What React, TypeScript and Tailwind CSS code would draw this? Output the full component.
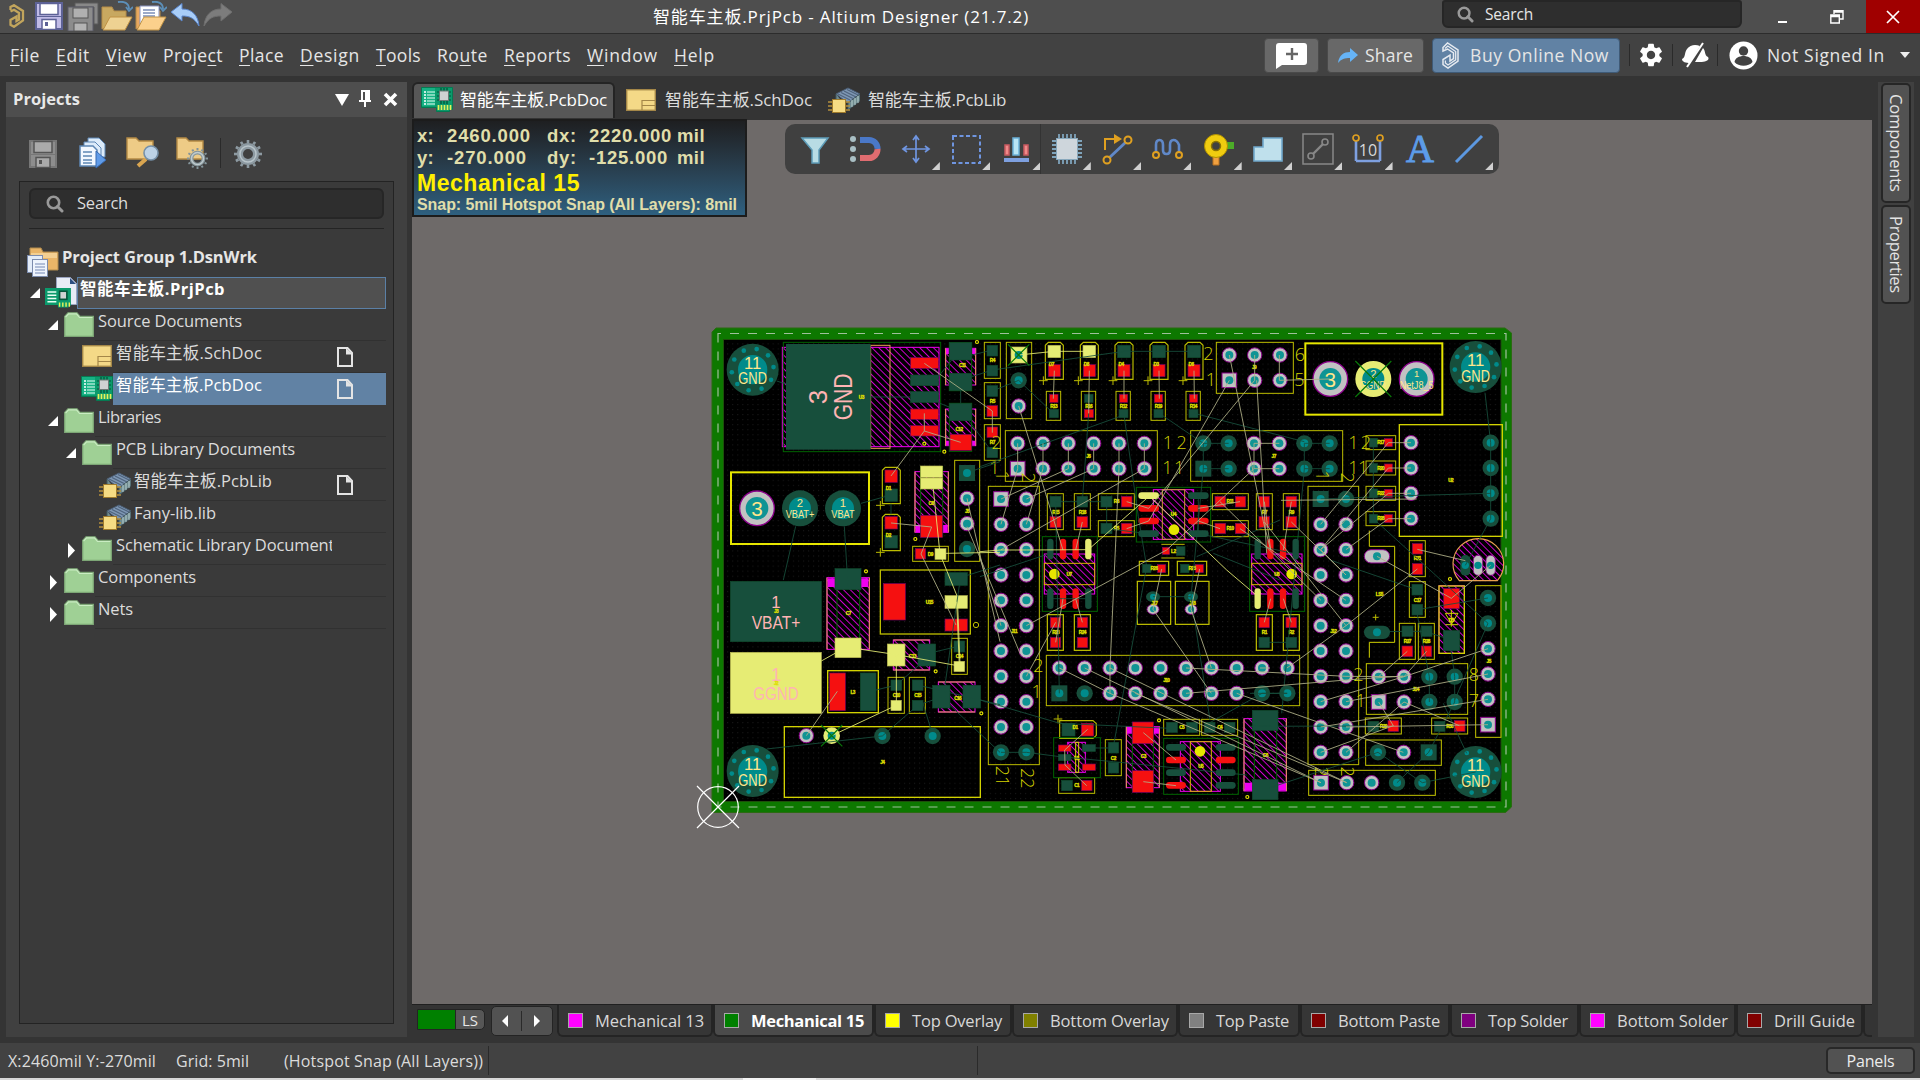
import React, { useLayoutEffect, useRef, useState } from "react";
import { MdSettings } from "react-icons/md";

const UI = "font-['Open_Sans','Noto_Sans_CJK_SC',sans-serif]";

/* One line of text whose tracking is adjusted so that it spans `w` pixels. */
function Fit({ w, children, className = "" }: { w: number; children: React.ReactNode; className?: string }) {
  const ref = useRef<HTMLSpanElement>(null);
  const [ls, setLs] = useState(0);
  useLayoutEffect(() => {
    const el = ref.current;
    if (!el) return;
    const n = (el.textContent || "").length;
    setLs((w - el.getBoundingClientRect().width) / n);
  }, [w]);
  return (
    <span className={"block shrink-0 whitespace-nowrap " + className} style={{ width: w }}>
      <span ref={ref} className="inline-block" style={{ letterSpacing: ls }}>
        {children}
      </span>
    </span>
  );
}

/* ---------- icons ---------- */
const Svg = ({ w, h, vb, className = "", children }: { w: number; h: number; vb?: string; className?: string; children: React.ReactNode }) => (
  <svg width={w} height={h} viewBox={vb || `0 0 ${w} ${h}`} className={"block shrink-0 " + className} fill="none">
    {children}
  </svg>
);

const Logo = ({ c = "#c2a55c", w = 16, h = 24 }: { c?: string; w?: number; h?: number }) => (
  <Svg w={w} h={h} vb="0 0 16 24">
    <path d="M1.500 6V3L5 1.200 14 7v9.500L5 22.800l-3.500-2V16l6-3.500V17l2.500-1.500V9L5 5.800 1.500 7.500" stroke={c} strokeWidth="2.300" strokeLinejoin="miter" />
  </Svg>
);
const LogoLine = () => (
  <Svg w={19} h={27} vb="0 0 19 27">
    <path d="M2 5.500 6.500 1 17 8v11L7 26l-5-3.500v-5L9 13v6l3.500-2.500V11L6.500 7 2 9z" stroke="#e6eaf0" strokeWidth="1.500" />
    <path d="M4 6.500 6.800 4 14.700 9.500v8.300L7 23l-2.600-2v-2.500" stroke="#e6eaf0" strokeWidth="1.300" />
  </Svg>
);
const Floppy = ({ dim = false, w = 28 }: { dim?: boolean; w?: number }) => {
  const a = dim ? "#777" : "#5d6296", b = dim ? "#8d8d8d" : "#c0bbe6", p = dim ? "#aaa" : "#fff", k = dim ? "#555" : "#5d6296";
  return (
    <Svg w={w} h={w} vb="0 0 28 28">
      <rect x="1" y="1" width="26" height="26" fill={b} stroke={a} strokeWidth="2" />
      <rect x="5" y="1.500" width="18" height="11" fill={p} stroke={k} strokeWidth="1.500" />
      <path d="M2 14.500h24" stroke={a} />
      <rect x="7" y="17.500" width="14" height="10" fill={p} stroke={k} strokeWidth="1.500" />
      <rect x="10" y="20" width="3" height="4" fill={k} />
    </Svg>
  );
};
const SaveAll = () => (
  <Svg w={32} h={30}>
    <path d="M8 2h23v21h-4V6H8z" fill="#888" stroke="#5a5a5a" />
    <rect x="1" y="6" width="25" height="24" fill="#8c8c8c" stroke="#5a5a68" />
    <rect x="6" y="7" width="15" height="10" fill="#b0b0b0" stroke="#555" />
    <rect x="7" y="22" width="13" height="8" fill="#b4b4b4" stroke="#555" />
  </Svg>
);
const OpenFolder = ({ doc = false }: { doc?: boolean }) => (
  <Svg w={32} h={30}>
    <path d="M1 28V6h10l2 4h12v6" fill={doc ? "#e8a860" : "#c8a860"} stroke="#b58c46" />
    {doc && (
      <>
        <path d="M5 5h19v20H5z" fill="#fff" stroke="#8a94c0" />
        <path d="M8 9h12M8 12h12M8 15h12" stroke="#7c8fb8" strokeWidth="1.300" />
      </>
    )}
    <path d="M9 16h22l-7 13H2z" fill={doc ? "#fbd08c" : "#eed292"} stroke="#c09244" />
    <path d="M17 1c6-1 11 1 11 7M25 6l3 4 4-4" stroke="#5c8fb8" strokeWidth="1.800" />
  </Svg>
);
const Undo = ({ dim = false }: { dim?: boolean }) => (
  <Svg w={30} h={24} className={dim ? "-scale-x-100" : ""}>
    <path d="M1 9 12 .500V6c10 0 16 6 17 17-5-8-9-10-17-10v5z" fill={dim ? "#7c7c7c" : "#a8cdf8"} stroke={dim ? "#6e6e6e" : "#5b86cc"} />
  </Svg>
);
const Mag = ({ s = 18 }: { s?: number }) => (
  <Svg w={s} h={s} vb="0 0 18 18">
    <circle cx="7.500" cy="7.500" r="5.700" stroke="#999" strokeWidth="2.600" />
    <path d="m11.500 11.500 4.500 4.500" stroke="#999" strokeWidth="3" strokeLinecap="round" />
  </Svg>
);
const gearTeeth = (r: number, n: number) =>
  Array.from({ length: n }, (_, i) => {
    const a = (i * 2 * Math.PI) / n;
    return <path key={i} d={`M${14 + (r - 3) * Math.cos(a)} ${14 + (r - 3) * Math.sin(a)}L${14 + r * Math.cos(a)} ${14 + r * Math.sin(a)}`} />;
  });
const Gear = ({ s = 28, c = "#8d9aa2" }: { s?: number; c?: string }) => (
  <Svg w={s} h={s} vb="0 0 28 28">
    <g stroke={c} strokeWidth="2.600">{gearTeeth(14, 12)}</g>
    <circle cx="14" cy="14" r="8" stroke={c} strokeWidth="6" />
    <circle cx="14" cy="14" r="8" stroke="#b8c4ca" strokeWidth="1.500" />
  </Svg>
);
const PcbIcon = ({ w = 32 }: { w?: number }) => (
  <Svg w={w} h={(w * 25) / 32} vb="0 0 32 25">
    <path d="M.500.500h31v22h-3v2h-13v-4H.500z" fill="#0b9a6c" stroke="#057a52" />
    <rect x="1" y="1" width="13" height="18" fill="#16b184" />
    <path d="M3 5h2M3 8h2M3 11h2M3 14h2M3 17h2" stroke="#fff" strokeWidth="1.400" />
    <path d="M6 5h8M6 8h8M6 11h8M6 14h8M6 17h8" stroke="#e8fff4" strokeWidth="1.200" />
    <path d="M20 1v16M23 1v16M26 1v16M16 5h14M16 9h14M16 13h14" stroke="#064f38" strokeWidth="1.200" />
    <rect x="18.500" y="4" width="9" height="9.500" fill="#cfd2d2" stroke="#6d7a76" />
    <path d="M17.500 18v5M20.500 18v5M23.500 18v5M26.500 18v5M29.500 18v5" stroke="#e6f25a" strokeWidth="1.700" />
  </Svg>
);
const SchIcon = () => (
  <Svg w={30} h={22}>
    <rect x=".700" y=".700" width="28.600" height="20.600" fill="#f4d987" stroke="#a48748" strokeWidth="1.400" />
    <path d="M16 21v-9.500h13.500M16 16.500h13.500" stroke="#a48748" strokeWidth="1.200" />
  </Svg>
);
const LibIcon = () => (
  <Svg w={32} h={26}>
    <path d="m8 7 12-6 12 6-12 9z" fill="#7e97b4" stroke="#4a5d74" />
    <path d="m10 7 12 6M13 5.500l12 6M16 4l12 6M19 2.500l11 5.500" stroke="#4f647d" strokeWidth="1.200" />
    <path d="m20 16 12-9v7l-12 9zM8 7v6l8 4" fill="#6f8b8f" stroke="#41565e" />
    <path d="M24 13v7M27 11v7M30 9v7" stroke="#b8cfd0" />
    <path d="M0 15h22M0 19h22M0 23h22" stroke="#b48f3c" strokeWidth="1.400" />
    <rect x="4.500" y="12.500" width="13" height="13" fill="#f6dc84" stroke="#a07b2c" />
  </Svg>
);
const Folder = () => (
  <Svg w={30} h={25}>
    <path d="M.700 24.300V4.500L4 .800h9l3 3.700h13.300v19.800z" fill="#9fd095" stroke="#7da676" strokeWidth="1.300" />
    <path d="M1.500 5.200 4.500 1.800h8l3 3.700h13" stroke="#c9ecc2" strokeWidth="1.200" />
  </Svg>
);
const Page = () => (
  <Svg w={16} h={20}>
    <path d="M1 1h9.500L15 6v13H1z" stroke="#e4e4e4" strokeWidth="2" />
    <path d="M9 1v6.500h6.500z" fill="#e4e4e4" />
  </Svg>
);
const GroupIcon = () => (
  <Svg w={32} h={30}>
    <path d="M3 20V1h11l2 4h15v18H3z" fill="#e9b568" stroke="#b08a4c" />
    <path d="M4 6h26v5H4z" fill="#f3cf91" />
    <rect x=".500" y="8.500" width="15" height="17" fill="#e3ecf8" stroke="#7c8cad" />
    <rect x="5.500" y="12.500" width="15" height="17" fill="#eef4fd" stroke="#7c8cad" />
    <path d="M8 17h10M8 20h10M8 23h10M8 26h10" stroke="#7488b4" strokeWidth="1.200" />
  </Svg>
);
const ProjIcon = () => (
  <Svg w={32} h={31}>
    <path d="M11.500.500h14l6 6v21h-20z" fill="#e8ecf6" stroke="#9aa3c0" />
    <path d="M25 1v6h6z" fill="#2b4d80" />
    <g transform="translate(0 11) scale(.810)">
      <path d="M0 0h32v22h-3v2H16v-3H0z" fill="#0b9a6c" />
      <path d="M3 5h11M3 9h11M3 13h11M3 17h11" stroke="#e8fff4" strokeWidth="1.700" />
      <rect x="18" y="4" width="9" height="10" fill="#cfd2d2" stroke="#05553a" strokeWidth="2" />
      <path d="M18 18v5M22 18v5M26 18v5M30 18v5" stroke="#e6f25a" strokeWidth="1.800" />
    </g>
  </Svg>
);

/* ---------- title and menu bars ---------- */
function TitleBar() {
  return (
    <div className="flex h-[34px] shrink-0 items-start border-b border-[#2c2c2c] bg-[#4e4e4e] text-white">
      <div className="flex w-[653px] shrink-0 items-start pl-[7px] pt-[1px]">
        <div className="pl-0.5 pt-[3px]"><Logo /></div>
        <div className="ml-[10px] pt-[1px]"><Floppy /></div>
        <div className="ml-[4px]"><SaveAll /></div>
        <div className="ml-[2px]"><OpenFolder /></div>
        <div className="ml-[2px]"><OpenFolder doc /></div>
        <div className="ml-[3px] pt-[2px]"><Undo /></div>
        <div className="ml-[3px] pt-[2px]"><Undo dim /></div>
      </div>
      <Fit w={376} className="pt-[4px] text-[17px] leading-[26px]">智能车主板.PrjPcb - Altium Designer (21.7.2)</Fit>
      <div className="ml-[413px] flex h-[28px] w-[300px] shrink-0 items-center rounded-b-[6px] rounded-t-[3px] border-2 border-[#262626] bg-[#2e2e2e] pl-[13px]">
        <Mag s={17} />
        <Fit w={48} className="ml-[11px] text-[15.500px] leading-[24px] text-[#e6e6e6]">Search</Fit>
      </div>
      <div className="ml-[36px] mt-[21px] h-[2px] w-[9px] shrink-0 bg-white" />
      <Svg w={14} h={14} className="ml-[43px] mt-[10px]">
        <path d="M4 4V.800h9V9h-3M.800 5h8.500v8H.800zM.800 6.500h8.500M4 2h9" stroke="#fff" strokeWidth="1.400" />
      </Svg>
      <div className="ml-auto flex h-[33px] w-[54px] shrink-0 items-center justify-center bg-[#a00000]">
        <Svg w={14} h={14}><path d="m1 1 12 12M13 1 1 13" stroke="#fff" strokeWidth="1.700" /></Svg>
      </div>
    </div>
  );
}

const menus: [string, number, number][] = [
  ["File", 0, 30], ["Edit", 0, 34], ["View", 0, 41], ["Project", 5, 60], ["Place", 0, 45], ["Design", 0, 60],
  ["Tools", 0, 45], ["Route", 2, 51], ["Reports", 0, 67], ["Window", 0, 71], ["Help", 0, 41],
];
const Sep = ({ h = 22 }: { h?: number }) => <div className="w-px shrink-0 bg-[#2a2a2a]" style={{ height: h }} />;

function MenuBar() {
  return (
    <div className="flex h-[42px] shrink-0 items-center bg-[#424242] text-[17.500px] leading-[26px] text-[#e6e6e6]">
      <div className="flex gap-4 pl-[10px]">
        {menus.map(([t, u, w]) => (
          <Fit key={t} w={w}>
            {t.slice(0, u)}<span className="underline decoration-1 underline-offset-[3px]">{t[u]}</span>{t.slice(u + 1)}
          </Fit>
        ))}
      </div>
      <div className="ml-auto flex items-center">
        <div className="flex h-[35px] w-[55px] items-center justify-center rounded-[4px] border border-[#4a4a4a] bg-[#686868]">
          <Svg w={33} h={27}>
            <path d="M4 1h25q3 0 3 3v16q0 3-3 3H7l-6 4V4q0-3 3-3z" fill="#fff" />
            <path d="M17 6v12M11 12h12" stroke="#666" strokeWidth="2.400" />
          </Svg>
        </div>
        <div className="ml-[8px] flex h-[35px] w-[97px] items-center rounded-[4px] border border-[#4a4a4a] bg-[#686868] pl-[9px]">
          <Svg w={21} h={17}><path d="M1 16c1-8 6-11 12-11V1l8 7-8 7v-4C8 11 4 12 1 16z" fill="#66b3f5" /></Svg>
          <Fit w={48} className="ml-[7px]">Share</Fit>
        </div>
        <div className="ml-[8px] flex h-[35px] w-[188px] items-center rounded-[4px] border border-[#3f5a76] bg-[#6182a4] pl-[8px]">
          <LogoLine />
          <Fit w={139} className="ml-[10px]">Buy Online Now</Fit>
        </div>
        <div className="ml-[9px]"><Sep /></div>
        <MdSettings size={28} color="#fff" className="ml-[7px] shrink-0" />
        <div className="ml-[7px]"><Sep /></div>
        <Svg w={28} h={26} className="ml-[8px]">
          <path d="M1 17C5 15 3 11 6 7s8-5 13-3L9 21C5 21 1 20 1 17zM22 6c3 3 1 7 5 9 2 3-2 5-8 5h-5z" fill="#fff" />
          <path d="M22 1 6 25" stroke="#fff" strokeWidth="2" />
        </Svg>
        <div className="ml-[8px]"><Sep /></div>
        <Svg w={29} h={29} className="ml-[11px]">
          <circle cx="14.500" cy="14.500" r="14" fill="#fff" />
          <circle cx="14.500" cy="10" r="4.700" fill="#424242" />
          <path d="M5.500 21c1-8 17-8 18 0-4 5-14 5-18 0z" fill="#424242" />
        </Svg>
        <Fit w={118} className="ml-[9px]">Not Signed In</Fit>
        <Svg w={10} h={6} className="ml-[15px] mr-[10px]"><path d="M0 0h10L5 6z" fill="#eee" /></Svg>
      </div>
    </div>
  );
}

/* ---------- projects panel ---------- */
type Row = { pad: number; arrow?: "open" | "closed"; icon: "folder" | "sch" | "pcb" | "lib"; text: string; w: number; page?: boolean; sel?: boolean };
const rows: Row[] = [
  { pad: 19, arrow: "open", icon: "folder", text: "Source Documents", w: 144 },
  { pad: 37, icon: "sch", text: "智能车主板.SchDoc", w: 146, page: true },
  { pad: 37, icon: "pcb", text: "智能车主板.PcbDoc", w: 146, page: true, sel: true },
  { pad: 19, arrow: "open", icon: "folder", text: "Libraries", w: 63 },
  { pad: 37, arrow: "open", icon: "folder", text: "PCB Library Documents", w: 179 },
  { pad: 55, icon: "lib", text: "智能车主板.PcbLib", w: 138, page: true },
  { pad: 55, icon: "lib", text: "Fany-lib.lib", w: 82 },
  { pad: 37, arrow: "closed", icon: "folder", text: "Schematic Library Documents", w: 226 },
  { pad: 19, arrow: "closed", icon: "folder", text: "Components", w: 98 },
  { pad: 19, arrow: "closed", icon: "folder", text: "Nets", w: 35 },
];
const Arrow = ({ open }: { open: boolean }) =>
  open ? (
    <Svg w={10} h={10}><path d="M10 0v10H0z" fill="#fff" /></Svg>
  ) : (
    <Svg w={10} h={15}><path d="M2 0v15l7-7.500z" fill="#fff" /></Svg>
  );

function TreeRow({ r }: { r: Row }) {
  return (
    <div className="flex h-8 items-start" style={{ paddingLeft: r.pad }}>
      <div className={"flex w-[19px] shrink-0 pl-[3px] " + (r.arrow === "open" ? "pt-[11px]" : "pt-[10px]")}>
        {r.arrow && <Arrow open={r.arrow === "open"} />}
      </div>
      <div className="flex w-[30px] shrink-0 justify-center pt-[3px]">
        {r.icon === "folder" && <Folder />}
        {r.icon === "sch" && <div className="pt-[1px]"><SchIcon /></div>}
        {r.icon === "pcb" && <PcbIcon />}
        {r.icon === "lib" && <LibIcon />}
      </div>
      <div className={"ml-[1px] flex h-8 min-w-0 flex-1 items-start pl-[3px] " + (r.sel ? "bg-[#6182a4] text-white" : "border-b border-[#313131]")}>
        <div className={"overflow-hidden " + (r.arrow === "closed" && r.w > 200 ? "w-[216px]" : "")}>
          <Fit w={r.w} className="leading-[24px]">{r.text}</Fit>
        </div>
        {r.page && <div className="ml-auto mr-[33px] pt-[6px]"><Page /></div>}
      </div>
    </div>
  );
}

function Projects() {
  return (
    <div className="ml-[6px] mt-[6px] flex h-[955px] w-[401px] shrink-0 flex-col bg-[#404040] text-[#dcdcdc]">
      <div className="flex h-[35px] items-center bg-[#4e4e4e] pl-[7px] pr-[9px]">
        <Fit w={67} className="text-[16.500px] font-bold text-[#e8e8e8]">Projects</Fit>
        <Svg w={14} h={12} className="ml-auto"><path d="M0 0h14L7 12z" fill="#fff" /></Svg>
        <Svg w={12} h={17} className="ml-[10px] -mt-[3px]">
          <path d="M2 0h9v10h1v2H7v5H5v-5H0v-2h2zm2 2v8h2V2z" fill="#fff" fillRule="evenodd" />
        </Svg>
        <Svg w={15} h={15} className="ml-[12px]"><path d="m2 2 11 11M13 2 2 13" stroke="#fff" strokeWidth="3.600" /></Svg>
      </div>
      <div className="flex h-[64px] items-start pl-[23px] pt-[20px]">
        <div className="pt-[3px]"><Floppy dim /></div>
        <Svg w={28} h={32} className="ml-[22px]">
          <path d="M9 1h11l6 6v13H9z" fill="#dcebfa" stroke="#5d86b4" />
          <path d="M5 5h11l6 6v13H5z" fill="#dcebfa" stroke="#5d86b4" />
          <path d="M1 9h13l4 4v16H1z" fill="#f2f8ff" stroke="#5d86b4" strokeWidth="1.500" />
          <path d="M4 15h9M4 19h9M4 23h9M4 26h9" stroke="#5d86b4" strokeWidth="1.500" />
          <path d="M17 14v17l10-8z" fill="#5f9be8" stroke="#3568b0" />
        </Svg>
        <Svg w={34} h={32} className="ml-[19px]">
          <path d="M1 22V1h9l3 3h14v18z" fill="#eecb86" stroke="#b48a45" strokeWidth="1.400" />
          <path d="m20 22-8 7" stroke="#d9a550" strokeWidth="4" />
          <circle cx="25" cy="16" r="7" fill="#bcd2e6" stroke="#7590a8" strokeWidth="1.600" />
        </Svg>
        <Svg w={34} h={32} className="ml-[16px]">
          <path d="M1 22V1h9l3 3h14v18z" fill="#eecb86" stroke="#b48a45" strokeWidth="1.400" />
          <g transform="translate(11 11) scale(.750)">
            <g stroke="#84949a" strokeWidth="2.600">{gearTeeth(14, 12)}</g>
            <circle cx="14" cy="14" r="8" stroke="#84949a" strokeWidth="5" />
            <circle cx="14" cy="14" r="8" stroke="#c0cbce" strokeWidth="2" />
          </g>
        </Svg>
        <div className="ml-[10px] pt-px"><Sep h={30} /></div>
        <div className="ml-[13px] pt-[3px]"><Gear /></div>
      </div>
      <div className="mx-[13px] flex h-[843px] flex-col border border-[#232323] bg-[#3a3a3a] pl-[6px] pr-[7px] pt-[6px]">
        <div className="ml-[3px] flex h-[31px] w-[355px] items-center rounded-[6px] border-2 border-[#262626] bg-[#2e2e2e] pl-[15px]">
          <Mag />
          <Fit w={51} className="-mt-[2px] ml-[13px] text-[16.500px] leading-[26px]">Search</Fit>
        </div>
        <div className="ml-[3px] mt-[9px] h-px w-[355px] bg-[#242424]" />
        <div className="mt-[17px] text-[16.500px]">
          <div className="flex h-[31px] items-start">
            <div className="pl-[1px] pt-px"><GroupIcon /></div>
            <Fit w={195} className="ml-[3px] font-bold leading-[22px] text-[#e6e6e6]">Project Group 1.DsnWrk</Fit>
          </div>
          <div className="flex h-8 items-start">
            <div className="ml-[4px] mt-[11px]"><Arrow open /></div>
            <div className="ml-[5px]"><ProjIcon /></div>
            <div className="h-8 flex-1 border border-[#5b80a6] bg-[#505050] pl-[2px]">
              <Fit w={145} className="font-bold leading-[22px] text-white">智能车主板.PrjPcb</Fit>
            </div>
          </div>
          {rows.map((r) => <TreeRow key={r.text} r={r} />)}
        </div>
      </div>
    </div>
  );
}

/* ---------- board drawing ---------- */
const C = { dk: "#174f3c", hole: "#008b8b", gray: "#c2c2c2", red: "#f51010", yel: "#e6ec74", ol: "#bcbc00", mag: "#f000f0", pur: "#8a008a", or: "#e8a050" };
type XY = [number, number];
type B4 = [number, number, number, number];
const Region = ({ x, y, children }: { x: number; y: number; children: React.ReactNode }) => (
  <g transform={`translate(${x} ${y}) scale(.33333)`}>{children}</g>
);
const Ring = ({ p, sq = false }: { p: XY; sq?: boolean }) => (
  <g>
    {sq ? <rect x={p[0] - 22} y={p[1] - 22} width="44" height="44" fill={C.gray} stroke={C.pur} strokeWidth="3" /> : <circle cx={p[0]} cy={p[1]} r="21.500" fill={C.gray} stroke={C.pur} strokeWidth="3" />}
    <circle cx={p[0]} cy={p[1]} r="12" fill="#0f9494" />
  </g>
);
const Gnd = ({ p, sq = false }: { p: XY; sq?: boolean }) => (
  <g>
    {sq ? <rect x={p[0] - 24} y={p[1] - 24} width="48" height="48" fill={C.dk} /> : <circle cx={p[0]} cy={p[1]} r="24.500" fill={C.dk} />}
    <circle cx={p[0]} cy={p[1]} r="12" fill={C.hole} />
  </g>
);
/* filled pad given by two corners */
const Pad = ({ b, c }: { b: B4; c: "r" | "d" | "y" }) => (
  <rect x={b[0]} y={b[1]} width={b[2] - b[0]} height={b[3] - b[1]} fill={c === "r" ? C.red : c === "d" ? C.dk : C.yel} stroke={c === "r" ? "#7a0060" : c === "d" ? "#0f4a2c" : "#b8b850"} strokeWidth="2" />
);
const Pads = ({ c, l }: { c: "r" | "d" | "y"; l: B4[] }) => <>{l.map((b, i) => <Pad key={i} b={b} c={c} />)}</>;
const Box = ({ b, c = C.ol, w = 3, f = "none" }: { b: B4; c?: string; w?: number; f?: string }) => (
  <rect x={b[0]} y={b[1]} width={b[2] - b[0]} height={b[3] - b[1]} fill={f} stroke={c} strokeWidth={w} />
);
const Boxes = ({ l, c, w }: { l: B4[]; c?: string; w?: number }) => <>{l.map((b, i) => <Box key={i} b={b} c={c} w={w} />)}</>;
const Hatch = ({ b, o = "" }: { b: B4; o?: string }) => (
  <g>
    <Box b={b} c={C.mag} f="url(#hatch)" />
    {o === "v" && <path d={`M${b[0]} ${b[1]}V${b[3]}M${b[2]} ${b[1]}V${b[3]}`} stroke={C.or} strokeWidth="3" />}
    {o === "h" && <path d={`M${b[0]} ${b[1]}H${b[2]}M${b[0]} ${b[3]}H${b[2]}`} stroke={C.or} strokeWidth="3" />}
  </g>
);
const Pill = ({ x, y, w, h, c }: { x: number; y: number; w: number; h: number; c: string }) => (
  <rect x={x - w / 2} y={y - h / 2} width={w} height={h} rx={Math.min(w, h) / 2} fill={c} />
);
const Lines = ({ l, c }: { l: number[][]; c: string }) => (
  <g stroke={c} strokeWidth="2.600" fill="none">{l.map((p, i) => <polyline key={i} points={p.join(" ")} />)}</g>
);
const Tag = ({ x, y, children }: { x: number; y: number; children: string }) => (
  <text x={x} y={y + 5} fontSize="14" fontWeight="bold" textAnchor="middle" fill="#f0f000" stroke="#d8d800" strokeWidth="1" letterSpacing="-1.500">{children}</text>
);
const Tags = ({ l }: { l: [string, number, number][] }) => <>{l.map(([t, x, y], i) => <Tag key={i} x={x} y={y}>{t}</Tag>)}</>;
const Num = ({ x, y, rot = 0, w, children }: { x: number; y: number; rot?: number; w?: number; children: string }) => (
  <text x={x} y={y} dy="19" fontSize="54" fontWeight="300" textAnchor="middle" fill="#d2d200" textLength={w} transform={rot ? `rotate(${rot} ${x} ${y})` : undefined} className="font-['Open_Sans',sans-serif]">{children}</text>
);
const Txt = ({ x, y, s, w, c = "#ffe68c", children }: { x: number; y: number; s: number; w?: number; c?: string; children: string }) => (
  <text x={x} y={y + s * 0.36} fontSize={s} textAnchor="middle" fill={c} textLength={w} lengthAdjust="spacingAndGlyphs">{children}</text>
);
const Mount = ({ x, y }: { x: number; y: number }) => (
  <g>
    <circle cx={x} cy={y} r="78" fill={C.dk} />
    <circle cx={x} cy={y} r="44" fill={C.hole} />
    {Array.from({ length: 10 }, (_, i) => {
      const a = ((-79 + i * 36) * Math.PI) / 180;
      return <circle key={i} cx={x + 63 * Math.cos(a)} cy={y + 63 * Math.sin(a)} r="7" fill={C.hole} />;
    })}
    <Txt x={x} y={y - 20} s={50}>11</Txt>
    <Txt x={x} y={y + 26} s={50} w={86}>GND</Txt>
  </g>
);
const Cross = ({ x, y, r = 32 }: { x: number; y: number; r?: number }) => (
  <path d={`M${x - r} ${y - r}l${2 * r} ${2 * r}M${x + r} ${y - r}l${-2 * r} ${2 * r}`} stroke="#087808" strokeWidth="3.500" />
);
const Plus = ({ x, y }: { x: number; y: number }) => <path d={`M${x - 13} ${y}h26M${x} ${y - 13}v26`} stroke={C.ol} strokeWidth="3" />;
const Dots = ({ l }: { l: XY[] }) => <>{l.map((p, i) => <circle key={i} cx={p[0]} cy={p[1]} r="4.500" fill="none" stroke="#e6e600" strokeWidth="3.500" />)}</>;
const Cham = ({ b }: { b: B4 }) => (
  <path d={`M${b[0]} ${b[3]}V${b[1] + 9}l9-9H${b[2] - 9}l9 9V${b[3]}z`} stroke={C.ol} strokeWidth="3.500" fill="none" />
);
const GREEN = "#006400";
const six = [113, 189, 265, 341, 417, 493];
const ten = Array.from({ length: 10 }, (_, i) => i);

function Board() {
  return (
    <svg viewBox="412 120 1460 884" className="block h-[884px] w-[1460px] font-['Liberation_Sans',sans-serif]">
      <defs>
        <pattern id="hatch" width="14.500" height="14.500" patternUnits="userSpaceOnUse" patternTransform="rotate(-45)">
          <rect width="14.500" height="14.500" fill="#000" /><rect width="2.600" height="14.500" fill="#e800e8" />
        </pattern>
        <pattern id="grid" width="5.050" height="5.050" patternUnits="userSpaceOnUse"><rect width="1" height="1" fill="#1c1c1c" /></pattern>
      </defs>
      <path d="M716 328H1505l6.500 5V807l-6 5.500H712V332z" fill="#0d7800" stroke="#2b6b12" />
      <rect x="723.500" y="339.500" width="777.500" height="462" fill="#000" stroke="#1d4f0a" />
      <rect x="724" y="340" width="777" height="461" fill="url(#grid)" />
      <path d="M718 333.500H1506V807H718z" fill="none" stroke="#9fc09b" strokeDasharray="9 9" strokeDashoffset="6" strokeWidth="1.200" />

      {/* upper left: regulator, battery connector */}
      <Region x={700} y={320}>
        <Mount x={158} y={149} />
        <Hatch b={[247, 82, 717, 380]} />
        <Box b={[250, 67, 722, 395]} c={GREEN} />
        <Box b={[512, 76, 570, 385]} c={C.or} />
        <rect x="258" y="72" width="254" height="317" fill={C.dk} />
        <g transform="rotate(-90 352 231)"><Txt x={352} y={231} s={78} c="#ffb4b4">3</Txt></g>
        <g transform="rotate(-90 428 231)"><Txt x={428} y={231} s={76} w={140} c="#ffb4b4">GND</Txt></g>
        <Pads c="r" l={[[632, 113, 715, 145], [632, 267, 715, 298], [632, 317, 715, 348]]} />
        <Pads c="d" l={[[632, 165, 715, 197], [632, 215, 715, 247]]} />
        <Hatch b={[737, 85, 827, 195]} o="v" />
        <Hatch b={[737, 267, 827, 377]} o="v" />
        <path d="M738 86h10v16h-10zM816 86h10v16h-10zM738 362h10v14h-10zM816 362h10v14h-10z" fill={C.mag} />
        <Boxes c={GREEN} l={[[748, 68, 815, 212], [748, 250, 815, 394]]} />
        <Pads c="d" l={[[748, 68, 815, 120], [748, 160, 815, 212], [748, 250, 815, 302]]} />
        <Pad c="r" b={[750, 343, 815, 391]} />
        <Box b={[93, 457, 507, 672]} c="#e6e600" w={6} />
        <circle cx="171" cy="565" r="52" fill={C.gray} stroke={C.pur} strokeWidth="4" />
        <circle cx="171" cy="565" r="34" fill="#0f9494" />
        <Txt x={171} y={567} s={62}>3</Txt>
        <circle cx="300" cy="565" r="54" fill={C.dk} /><circle cx="300" cy="565" r="33" fill={C.hole} />
        <circle cx="429" cy="565" r="54" fill={C.dk} /><circle cx="429" cy="565" r="33" fill={C.hole} />
        <Txt x={300} y={550} s={34}>2</Txt><Txt x={300} y={583} s={34} w={86}>VBAT+</Txt>
        <Txt x={429} y={550} s={34}>1</Txt><Txt x={429} y={583} s={34} w={70}>VBAT</Txt>
        <Cham b={[547, 442, 601, 551]} /><Cham b={[547, 583, 601, 692]} />
        <Pads c="r" l={[[555, 450, 592, 487], [555, 590, 592, 627]]} />
        <Pads c="d" l={[[555, 507, 592, 544], [555, 647, 592, 684]]} />
        <Plus x={541} y={556} /><Plus x={541} y={697} />
        <Hatch b={[645, 455, 745, 637]} o="v" />
        <path d="M647 615h15v22h-15zM728 615h15v22h-15z" fill={C.mag} />
        <Box b={[662, 440, 728, 650]} c={GREEN} />
        <Pads c="y" l={[[662, 438, 728, 472], [662, 474, 728, 507]]} />
        <Pad c="r" b={[662, 586, 727, 652]} />
        <Boxes l={[[638, 679, 745, 724], [764, 421, 839, 724]]} />
        <Pad c="r" b={[646, 686, 677, 717]} /><Pad c="y" b={[705, 686, 738, 718]} />
        <Gnd p={[801, 459]} sq /><Ring p={[801, 535]} /><Ring p={[801, 611]} /><Gnd p={[801, 687]} />
        <Dots l={[[673, 371], [831, 66], [733, 395], [646, 657]]} />
        <Tags l={[["U3", 484, 231], ["C11", 787, 136], ["C12", 777, 327], ["D1", 565, 505], ["D2", 565, 646], ["C8", 693, 550], ["D9", 691, 702], ["J5", 801, 573]]} />
      </Region>

      {/* lower left: power input */}
      <Region x={690} y={560}>
        <Pad c="d" b={[121, 64, 394, 245]} /><Pad c="y" b={[121, 277, 394, 460]} />
        <Txt x={258} y={126} s={50} c="#ffb4b4">1</Txt><Txt x={258} y={188} s={54} w={146} c="#ffb4b4">VBAT+</Txt>
        <Txt x={258} y={344} s={54} c="#ffb4b4">1</Txt><Txt x={258} y={400} s={56} w={136} c="#ffb4b4">GGND</Txt>
        <Hatch b={[411, 53, 538, 268]} o="v" />
        <path d="M413 55h22v26h-22zM513 55h22v26h-22z" fill={C.mag} />
        <Box b={[441, 80, 509, 240]} c={GREEN} />
        <Pad c="d" b={[435, 26, 513, 89]} /><Pad c="y" b={[435, 234, 513, 293]} />
        <Box b={[571, 30, 841, 222]} w={4} />
        <Pads c="r" l={[[580, 71, 646, 180], [765, 177, 832, 213]]} />
        <Box b={[413, 332, 565, 458]} w={4} c="#d2d200" />
        <Pad c="r" b={[419, 339, 466, 452]} />
        <Hatch b={[610, 240, 719, 330]} o="h" /><Hatch b={[745, 366, 855, 456]} o="h" />
        <Pads c="d" l={[[765, 38, 832, 76], [684, 252, 737, 318], [792, 243, 824, 276], [511, 339, 558, 452], [603, 360, 635, 391], [667, 360, 699, 391], [667, 421, 699, 452], [728, 376, 780, 444], [819, 376, 872, 444]]} />
        <Pads c="y" l={[[765, 107, 832, 145], [592, 252, 645, 318], [792, 304, 824, 335], [603, 421, 634, 452]]} />
        <Boxes l={[[785, 235, 832, 343], [594, 352, 643, 460], [658, 352, 706, 460]]} />
        <Box b={[283, 500, 871, 712]} w={4} c="#d2d200" />
        <Ring p={[349, 527]} />
        <circle cx="425" cy="527" r="25" fill={C.yel} /><circle cx="425" cy="527" r="12" fill={C.hole} />
        <Gnd p={[577, 528]} /><Gnd p={[728, 528]} />
        <Mount x={188} y={633} />
        <circle cx="858" cy="195" r="8" fill="none" stroke={C.ol} strokeWidth="3" />
        <Dots l={[[528, 34], [737, 334], [874, 460]]} />
        <Tags l={[["J3", 258, 155], ["J2", 258, 370], ["C7", 475, 160], ["U15", 718, 126], ["C13", 667, 290], ["C14", 808, 290], ["L3", 488, 397], ["C10", 619, 407], ["C15", 683, 407], ["C16", 803, 416], ["J4", 577, 606]]} />
      </Region>

      {/* centre column and headers */}
      <Region x={980} y={320}>
        <Boxes l={[[13, 67, 61, 175], [13, 188, 61, 296], [13, 314, 61, 421], [79, 67, 155, 296], [76, 332, 532, 484], [632, 332, 1088, 484], [709, 67, 940, 220], [25, 499, 178, 1334], [202, 521, 250, 629], [283, 521, 331, 629], [355, 521, 463, 569], [355, 602, 463, 650], [697, 521, 805, 569], [697, 602, 805, 650], [829, 521, 877, 629], [910, 521, 958, 629]]} />
        <Pads c="d" l={[[21, 76, 53, 108], [21, 136, 53, 168], [21, 197, 53, 229], [21, 382, 53, 413], [210, 529, 243, 561], [291, 529, 323, 561], [363, 529, 396, 561], [363, 610, 396, 641]]} />
        <Pads c="r" l={[[21, 257, 53, 289], [21, 321, 53, 352], [210, 590, 243, 622], [291, 590, 323, 622], [424, 529, 456, 561], [424, 610, 456, 641], [705, 529, 737, 561], [766, 529, 797, 561], [705, 610, 737, 641], [766, 610, 797, 641], [837, 529, 868, 561], [837, 590, 868, 622], [918, 529, 950, 561], [918, 590, 950, 622]]} />
        <Pad c="y" b={[93, 81, 141, 129]} /><circle cx="116" cy="105" r="12" fill={C.hole} />
        <Gnd p={[116, 181]} /><Ring p={[116, 258]} />
        {[223, 328, 432, 537, 642].map((x, i) => (
          <g key={x}>
            <Cham b={[x - 27, 67, x + 27, 178]} />
            <Pad c={i < 2 ? "y" : "d"} b={[x - 19, 76, x + 19, 113]} />
            <Pad c="r" b={[x - 18, 134, x + 18, 170]} />
            <Plus x={x - 33} y={182} />
            <Box b={[x - 24, 214, x + 19, 301]} />
            <Pad c={i === 1 ? "d" : "r"} b={[x - 14, 223, x + 11, 247]} />
            <Pad c={i === 1 ? "r" : "d"} b={[x - 15, 268, x + 12, 293]} />
            <Tags l={[["D" + [7, 8, 4, 3, 6][i], x - 9, 132], ["R" + [13, 16, 12, 19, 14][i], x - 2, 258]]} />
          </g>
        ))}
        {six.map((x, i) => <g key={x}><Ring p={[x, 370]} /><Ring p={[x, 446]} sq={i === 0} /></g>)}
        {[670, 746, 973, 1049].map((x, i) => <g key={x}><Gnd p={[x, 370]} /><Gnd p={[x, 446]} sq={i === 0} /></g>)}
        {[822, 898].map((x) => <g key={x}><Ring p={[x, 370]} /><Ring p={[x, 446]} /></g>)}
        {[748, 824, 900].map((x, i) => <g key={x}><Ring p={[x, 105]} /><Ring p={[x, 181]} sq={i === 0} /></g>)}
        {ten.map((i) => <g key={i}><Ring p={[63, 537 + 76 * i]} sq={i === 0} /><Ring p={[139, 537 + 76 * i]} /></g>)}
        <Gnd p={[63, 1297]} /><Gnd p={[139, 1297]} />
        <Num x={50} y={368}>2</Num><Num x={43} y={443}>1</Num><Num x={584} y={368} w={72}>12</Num>
        <Num x={580} y={443} w={66}>11</Num><Num x={685} y={102}>2</Num><Num x={693} y={180}>1</Num>
        <Num x={960} y={103}>6</Num><Num x={958} y={178}>5</Num>
        <Num x={67} y={467} rot={90}>1</Num><Num x={145} y={473} rot={90}>2</Num>
        <Num x={67} y={1368} rot={90}>21</Num><Num x={143} y={1375} rot={90}>22</Num>

        <Hatch b={[520, 509, 641, 658]} /><Box b={[469, 502, 692, 666]} c={GREEN} /><Box b={[547, 509, 614, 658]} c="#d09838" />
        {["y", "r", "r", "d"].map((c, i) => (
          <g key={i}>
            <Pill x={506} y={527 + 38 * i} w={62} h={20} c={c === "y" ? C.yel : c === "r" ? C.red : C.dk} />
            <Pill x={655} y={527 + 38 * i} w={62} h={20} c={c === "r" ? C.red : C.dk} />
          </g>
        ))}
        <circle cx="582" cy="629" r="16" fill="#e6e600" />
        <path d="M566 583h28M580 568v30" stroke={GREEN} strokeWidth="3" />
        {[187, 809].map((x, k) => (
          <g key={x}>
            <Hatch b={[x + 6, 702, x + 157, 822]} />
            <Box b={[x, 650, x + 165, 874]} c={GREEN} />
            <Box b={[x + 6, 730, x + 157, 794]} c="#d8b400" />
            {[0, 1, 2, 3].map((i) => (
              <g key={i}>
                <Pill x={x + 24 + 38 * i} y={687} w={19} h={62} c={i === 1 || i === 2 ? C.red : i === 3 && k === 0 ? C.yel : C.dk} />
                <Pill x={x + 24 + 38 * i} y={836} w={19} h={62} c={i === 1 || i === 2 ? C.red : i === 0 && k === 1 ? C.yel : C.dk} />
              </g>
            ))}
            <circle cx={k ? 935 : 223} cy="762" r="16" fill="#e6e600" />
            <Tag x={k ? 890 : 267} y={762}>{k ? "U8" : "U7"}</Tag>
          </g>
        ))}
        <path d="M544 673h70M544 714h70" stroke={C.ol} strokeWidth="3" />
        <Pad c="r" b={[547, 682, 569, 703]} /><Pad c="d" b={[589, 680, 615, 706]} />
        <Tags l={[["R4", 37, 121], ["R5", 37, 243], ["R7", 37, 367], ["J6", 325, 408], ["J7", 881, 408], ["J9", 822, 143], ["J11", 102, 933], ["R15", 227, 576], ["R18", 307, 576], ["R8", 409, 545], ["R5", 409, 626], ["R11", 750, 545], ["R10", 750, 626], ["R7", 853, 576], ["R9", 934, 576], ["U4", 580, 583], ["L2", 580, 693]]} />
      </Region>

      {/* lower centre */}
      <Region x={980} y={560}>
        <Boxes w={3.5} c="#c8c800" l={[[478, 4, 566, 46], [592, 4, 680, 46], [472, 64, 572, 193], [586, 64, 687, 193], [202, 164, 250, 271], [283, 164, 331, 271], [829, 164, 877, 271], [910, 164, 958, 271]]} />
        <Boxes l={[[199, 286, 959, 437], [236, 653, 344, 700], [376, 539, 424, 647], [551, 478, 659, 526], [665, 478, 773, 526]]} />
        <Pads c="d" l={[[488, 13, 513, 38], [602, 13, 627, 38], [837, 232, 868, 263], [918, 232, 950, 263], [246, 490, 285, 528], [245, 661, 277, 692], [385, 547, 416, 579], [385, 607, 416, 639], [559, 487, 592, 517], [620, 487, 652, 517], [673, 487, 705, 517], [733, 487, 765, 517]]} />
        <Pads c="r" l={[[533, 14, 557, 38], [647, 14, 670, 38], [211, 172, 242, 203], [211, 232, 242, 263], [292, 172, 323, 203], [292, 232, 323, 263], [837, 172, 868, 203], [918, 172, 950, 203], [304, 490, 341, 528], [305, 661, 336, 692]]} />
        {[519, 633].map((x) => (
          <g key={x}>
            <ellipse cx={x} cy="110" rx="21" ry="16" fill={C.dk} /><circle cx={x} cy="110" r="9" fill={C.hole} />
            <ellipse cx={x} cy="148" rx="18" ry="15" fill={C.gray} stroke={C.pur} strokeWidth="2.500" /><circle cx={x} cy="148" r="9" fill="#0f9494" />
          </g>
        ))}
        {ten.map((i) => (
          <g key={i}>
            <Ring p={[238 + 76 * i, 324]} />
            {i < 2 || i > 7 ? <Gnd p={[238 + 76 * i, 400]} sq={i === 0} /> : <Ring p={[238 + 76 * i, 400]} />}
          </g>
        ))}
        <Num x={175} y={318}>2</Num><Num x={170} y={396}>1</Num>
        <path d="M239 482h100l10 9v35l-10 9H239z" stroke={C.ol} strokeWidth="3.500" fill="none" />
        <Plus x={234} y={477} />
        <Hatch b={[263, 547, 316, 637]} /><Box b={[221, 533, 361, 653]} c={GREEN} /><Box b={[287, 547, 296, 637]} c="#d8d800" />
        <Pads c="r" l={[[235, 555, 273, 574], [235, 612, 273, 631], [307, 612, 346, 631]]} />
        <Pads c="d" l={[[235, 583, 273, 602], [307, 554, 346, 574]]} />
        <Hatch b={[439, 500, 538, 683]} o="v" />
        <path d="M441 501h16v20h-16zM521 501h16v20h-16z" fill={C.mag} />
        <Box b={[457, 500, 520, 690]} c={GREEN} />
        <Pads c="r" l={[[457, 486, 520, 551], [457, 632, 520, 697]]} />
        <Hatch b={[601, 545, 721, 694]} /><Box b={[551, 535, 775, 703]} c={GREEN} /><Box b={[631, 545, 694, 694]} c="#d8b400" />
        {[0, 1, 2, 3].map((i) => (
          <g key={i}>
            <Pill x={588} y={562 + 38 * i} w={60} h={20} c={i % 2 ? C.red : C.dk} />
            <Pill x={737} y={562 + 38 * i} w={60} h={20} c={i === 1 ? C.red : C.dk} />
          </g>
        ))}
        <circle cx="660" cy="574" r="16" fill="#e6e600" />
        <Hatch b={[792, 476, 919, 693]} o="v" />
        <path d="M794 668h24v24h-24zM894 668h24v24h-24z" fill={C.mag} />
        <Box b={[823, 500, 890, 670]} c={GREEN} />
        <Pads c="d" l={[[817, 451, 894, 511], [817, 659, 894, 719]]} />
        <Dots l={[[537, 481], [802, 711]]} />
        <Tags l={[["R26", 522, 26], ["R25", 636, 26], ["J17", 523, 129], ["J18", 637, 129], ["R23", 227, 217], ["R24", 307, 217], ["R1", 853, 217], ["R2", 934, 217], ["J10", 559, 362], ["D1", 285, 501], ["C1", 290, 677], ["C2", 400, 594], ["U1", 290, 594], ["C3", 490, 588], ["C5", 605, 501], ["C4", 719, 501], ["U5", 662, 620], ["C6", 856, 587]]} />
      </Region>

      {/* upper right */}
      <Region x={1250} y={320}>
        <Box b={[166, 70, 577, 284]} c="#e6e600" w={6} />
        <circle cx="241" cy="177" r="52" fill={C.gray} stroke={C.pur} strokeWidth="4" /><circle cx="241" cy="177" r="33" fill="#0f9494" />
        <circle cx="370" cy="177" r="54" fill={C.yel} /><circle cx="370" cy="177" r="33" fill={C.hole} />
        <circle cx="500" cy="177" r="52" fill={C.gray} stroke={C.pur} strokeWidth="4" /><circle cx="500" cy="177" r="33" fill="#0f9494" />
        <Txt x={241} y={180} s={62}>3</Txt>
        <Txt x={370} y={162} s={34}>2</Txt><Txt x={368} y={194} s={34} w={78}>GGND</Txt>
        <Txt x={500} y={162} s={28}>1</Txt><Txt x={500} y={194} s={34} w={102}>NetJ8_5</Txt>
        <Mount x={677} y={141} />
        <Box b={[448, 314, 757, 649]} w={4} c="#d2d200" />
        {[368, 444, 520, 596].map((y, i) => (
          <g key={y}>
            <Box b={[348, y - 21, 437, y + 21]} />
            <Pad c="d" b={[358, y - 13, 382, y + 13]} /><Pad c="r" b={[404, y - 12, 427, y + 12]} />
            <Ring p={[483, y]} /><Gnd p={[722, y]} />
            <Tag x={392} y={y}>{["R17", "R20", "R22", "R28"][i]}</Tag>
          </g>
        ))}
        <Box b={[174, 499, 326, 1334]} />
        {ten.map((i) => <g key={i}><Ring p={[212, 613 + 76 * i]} /><Ring p={[288, 613 + 76 * i]} /></g>)}
        <Gnd p={[212, 537]} sq /><Gnd p={[288, 537]} />
        <Num x={329} y={368} w={68}>12</Num><Num x={325} y={443} w={60}>11</Num>
        <Num x={217} y={467} rot={90}>1</Num><Num x={293} y={473} rot={90}>2</Num>
        <path d="M358 632v47h76v288h-76v46" stroke="#d2d200" strokeWidth="3" fill="none" />
        <rect x="343" y="689" width="76" height="40" rx="20" fill={C.gray} stroke={C.pur} strokeWidth="3" /><circle cx="381" cy="709" r="12" fill="#0f9494" />
        <Box b={[478, 662, 526, 770]} /><Pads c="r" l={[[487, 671, 518, 702], [487, 731, 518, 763]]} />
        <path d="M628 782a76 76 0 1 1 114 0z" fill="url(#hatch)" stroke={C.or} strokeWidth="3.500" />
        <Pill x={646} y={736} w={30} h={62} c={C.dk} />
        {[684, 722].map((x) => <rect key={x} x={x - 14} y={706} width="28" height="60" rx="14" fill={C.gray} stroke={C.pur} strokeWidth="2.500" />)}
        {[646, 684, 722].map((x) => <circle key={x} cx={x} cy="736" r="11" fill={C.hole} />)}
        <Tags l={[["U2", 602, 482], ["R21", 502, 716]]} />
      </Region>

      {/* lower right */}
      <Region x={1250} y={560}>
        <Boxes l={[[478, 65, 526, 172], [448, 190, 496, 298], [505, 190, 553, 298], [677, 77, 753, 532], [349, 311, 653, 463], [346, 474, 454, 522], [545, 474, 653, 522], [347, 540, 574, 616], [176, 631, 556, 706]]} c="#c4c400" />
        <rect x="342" y="197" width="78" height="40" rx="20" fill={C.dk} /><circle cx="381" cy="217" r="12" fill={C.hole} />
        <path d="M368 172h18M377 163v18" stroke={C.ol} strokeWidth="3" />
        <Hatch b={[567, 77, 643, 280]} /><Box b={[567, 78, 643, 280]} w={4} c="#d2d200" />
        <Pads c="d" l={[[486, 73, 518, 105], [486, 133, 518, 165], [456, 198, 489, 229], [514, 198, 546, 229], [580, 212, 629, 272], [354, 484, 386, 514], [553, 484, 585, 514]]} />
        <Pads c="r" l={[[456, 258, 488, 290], [514, 258, 545, 290], [581, 86, 628, 146], [414, 482, 446, 514], [613, 482, 645, 514]]} />
        <path d="M604 150v50M586 160h38l-19 32zM586 194h38" stroke="#d2d200" strokeWidth="3" fill="none" />
        {[114, 190].map((y) => <Gnd key={y} p={[714, y]} />)}
        {[266, 342, 418, 494].map((y, i) => <Ring key={y} p={[714, y]} sq={i === 3} />)}
        {[350, 426].map((y, i) => <g key={y}><Ring p={[386, y]} sq={i === 1} /><Ring p={[462, y]} /><Gnd p={[538, y]} /><Gnd p={[614, y]} /></g>)}
        <Gnd p={[384, 577]} /><Ring p={[461, 577]} /><Gnd p={[536, 577]} sq />
        <Ring p={[213, 668]} sq /><Ring p={[290, 668]} /><Ring p={[365, 668]} /><Gnd p={[441, 668]} /><Gnd p={[517, 668]} />
        <Num x={325} y={345}>2</Num><Num x={332} y={422}>1</Num><Num x={672} y={345}>8</Num><Num x={672} y={421}>7</Num>
        <Num x={215} y={635} rot={90}>2</Num><Num x={292} y={635} rot={90}>2</Num>
        <Mount x={677} y={636} />
        <Dots l={[[600, 57]]} />
        <Tags l={[["LS5", 388, 103], ["C17", 502, 120], ["R27", 472, 244], ["R28", 529, 244], ["J12", 250, 213], ["D5", 604, 180], ["J5", 716, 304], ["J14", 497, 387], ["R29", 400, 498], ["R30", 599, 498]]} />
      </Region>

      {/* unrouted connections */}
      <Region x={700} y={320}>
        <Lines c={C.dk} l={[[512, 231, 632, 231], [230, 183, 258, 192], [715, 170, 755, 120, 877, 90], [715, 248, 782, 275], [782, 212, 782, 250], [815, 170, 877, 150], [805, 300, 877, 397], [573, 525, 483, 550], [573, 551, 573, 583], [287, 619, 250, 780], [433, 619, 444, 800], [825, 450, 900, 425]]} />
        <Lines c="#b0b088" l={[[673, 130, 877, 273, 877, 338], [673, 280, 673, 333, 573, 468], [673, 333, 782, 367], [573, 609, 695, 621, 663, 702, 768, 915], [801, 535, 900, 965], [801, 620, 960, 1000]]} />
        <Lines c={C.yel} l={[[700, 507, 720, 702, 772, 830, 780, 1030], [738, 700, 900, 697]]} />
      </Region>
      <Region x={690} y={560}>
        <Lines c={C.dk} l={[[558, 390, 619, 375, 684, 318], [737, 275, 792, 262], [808, 76, 765, 375], [683, 375, 930, 434], [683, 436, 577, 528, 230, 567], [699, 430, 722, 505], [780, 436, 930, 577], [832, 46, 930, 15], [699, 430, 760, 410]]} />
        <Lines c="#b0b088" l={[[442, 394, 349, 527]]} />
        <Lines c={C.yel} l={[[513, 268, 620, 284, 808, 318, 800, 125], [435, 280, 394, 303], [619, 290, 619, 436, 425, 527]]} />
        <Cross x={425} y={527} />
      </Region>
      <Region x={980} y={320}>
        <Lines c={C.dk} l={[[37, 150, 432, 94, 642, 94], [37, 213, 116, 181, 220, 280], [0, 440, 432, 285, 475, 590, 500, 740], [326, 280, 307, 545, 227, 545, 238, 1120], [307, 545, 380, 545, 380, 626, 506, 641], [538, 280, 670, 370], [643, 280, 973, 365], [670, 370, 670, 446, 633, 830, 690, 1200], [670, 370, 746, 370], [670, 446, 746, 446], [973, 370, 1049, 370], [973, 446, 1049, 446], [973, 370, 973, 446, 905, 1180], [655, 641, 940, 700], [500, 740, 400, 1280], [655, 527, 655, 641], [0, 1140, 240, 1210, 570, 1225], [139, 1297, 240, 1310, 400, 1325, 800, 1365], [63, 1297, 139, 1297], [0, 770, 211, 700], [519, 830, 633, 830], [686, 1210, 846, 1120, 922, 1120], [211, 836, 325, 836], [330, 1284, 385, 1284], [900, 600, 650, 710], [700, 700, 900, 780]]} />
        <Lines c="#b0b088" l={[
          [223, 152, 220, 236], [328, 152, 326, 280], [432, 152, 432, 236], [537, 152, 538, 236], [642, 152, 643, 236],
          ...six.map((x) => [x, 370, x, 446]),
          [116, 258, 249, 690], [113, 446, 63, 613], [189, 446, 139, 613], [265, 446, 63, 537], [341, 446, 139, 537], [493, 446, 63, 689],
          [417, 446, 390, 1044, 390, 1120], [307, 606, 287, 690], [748, 181, 506, 603], [824, 181, 506, 565], [748, 105, 850, 605, 872, 690], [824, 105, 824, 181], [830, 181, 860, 700],
          [822, 370, 822, 446, 560, 690, 139, 917], [822, 370, 898, 370], [822, 446, 898, 446], [898, 105, 898, 181, 1050, 177],
          [506, 565, 440, 545], [506, 603, 440, 626], [655, 565, 780, 545], [655, 603, 720, 626], [720, 545, 1023, 841], [780, 626, 1098, 841], [853, 545, 872, 690],
          [853, 606, 1098, 917], [934, 545, 910, 690], [934, 606, 1098, 765], [872, 836, 853, 907], [910, 836, 934, 907], [249, 836, 227, 967], [287, 836, 307, 907], [227, 907, 139, 1069],
          [0, 715, 63, 917], [545, 747, 519, 868, 694, 1120], [659, 747, 633, 868, 694, 1044],
          [238, 1044, 390, 1120], [314, 1044, 1023, 1388], [390, 1044, 1100, 1388], [390, 1120, 1023, 1388], [466, 1120, 1100, 1388], [770, 1120, 1270, 1297], [618, 1044, 1098, 1069, 1270, 1070], [618, 1120, 1098, 1080, 1270, 1068],
          [323, 1228, 254, 1290, 255, 1335, 320, 1397], [490, 1238, 588, 1320], [490, 1385, 588, 1397],
        ]} />
        <Lines c={C.yel} l={[[116, 105, 223, 94, 328, 94], [506, 530, 325, 689, 139, 690, 63, 690, 0, 695], [506, 527, 740, 750, 834, 830]]} />
        <Cross x={116} y={105} />
      </Region>
      <Region x={1250} y={560}>
        <Lines c={C.dk} l={[[705, -502, 722, -352, 722, -124, 646, 16], [212, -183, 470, -193, 722, -200], [370, -352, 370, -124, 540, 30, 714, 190], [400, 215, 472, 214, 530, 214], [502, 149, 714, 114], [502, 165, 538, 350, 538, 426], [604, 272, 614, 350, 614, 426, 536, 577], [714, 190, 614, 420], [370, 498, 0, 499], [384, 577, 60, 683], [536, 577, 441, 668], [384, 577, 517, 668, 677, 636], [580, 430, 650, 580], [240, 0, 500, 89], [43, 247, 124, 247], [524, 214, 604, 240], [0, 400, 111, 400]]} />
        <Lines c="#b0b088" l={[[93, -179, 500, -183], [212, -107, 415, -352, 483, -352], [212, -31, 415, -276, 483, -276], [212, -31, 415, -200, 483, -200], [288, -31, 415, -124, 483, -124], [502, -32, 646, 2], [111, 324, 288, 197, 502, 27], [212, 425, 462, 350, 714, 266], [288, 425, 714, 342], [212, 501, 714, 418], [288, 501, 714, 494], [212, 577, 430, 497, 386, 426], [288, 577, 462, 426, 628, 497], [386, 350, 472, 274], [462, 350, 530, 274], [381, -11, 604, 115, 722, 16], [212, -31, 288, 45], [30, 324, 60, 324]]} />
        <Cross x={370} y={-543} r={54} />
      </Region>

      <g stroke="#fff" fill="none" strokeWidth="1.200">
        <circle cx="718" cy="807" r="20.300" />
        <path d="m697 786 42 42M739 786l-42 42" />
      </g>
    </svg>
  );
}

/* ---------- editor ---------- */
const tools: React.ReactNode[] = [
  <path d="M3 5h26l-9 12v13h-7V17z" fill="#b8dce4" stroke="#5d9cb8" strokeWidth="1.500" />,
  <g><path d="M11 7h9a8.500 8.500 0 0 1 8.500 9" stroke="#4a78c8" strokeWidth="6" /><path d="M11 25h9a8.500 8.500 0 0 0 8.500-9" stroke="#e06c70" strokeWidth="6" /><g fill="#a9bfc4"><circle cx="4" cy="6" r="3" /><circle cx="4" cy="16" r="3" /><circle cx="4" cy="26" r="3" /></g></g>,
  <path d="M16 4v24M4 16h24M13 7l3-4 3 4M13 25l3 4 3-4M7 13l-4 3 4 3M25 13l4 3-4 3" stroke="#6f95e0" strokeWidth="1.700" />,
  <rect x="3" y="3" width="27" height="27" stroke="#6f95e0" strokeWidth="2" strokeDasharray="4 2.500" />,
  <g><path d="M5 12h4v10H5zM24 12h4v10h-4z" fill="#f08a8a" stroke="#c85a60" strokeWidth="1.500" /><path d="M13 5h6v17h-6z" fill="#b8e4f4" stroke="#6ab0d8" strokeWidth="1.500" /><path d="M4 27h25" stroke="#7ea0e0" strokeWidth="4" /></g>,
  <g><path d="M8 1v30M12 1v30M16 1v30M20 1v30M24 1v30M1 8h30M1 12h30M1 16h30M1 20h30M1 24h30" stroke="#7fa4bc" strokeWidth="1.800" /><rect x="5.500" y="5.500" width="21" height="21" fill="#ced6dc" stroke="#88a8bc" /></g>,
  <g><path d="M4 17V6h10" stroke="#e0a020" strokeWidth="2" /><path d="m13 1 8 5-8 5z" fill="#e0a020" /><path d="M8 25 25 9" stroke="#6088c8" strokeWidth="3" /><circle cx="6" cy="27" r="3.500" stroke="#e0a020" strokeWidth="2" /><circle cx="27" cy="7" r="3.500" stroke="#e0a020" strokeWidth="2" /></g>,
  <g><path d="M5 20V12q0-5 3.500-5t3.500 5v5q0 4 3.500 4t3.500-4v-5q0-5 3.500-5T28 12v8" stroke="#6088c8" strokeWidth="2.600" /><circle cx="5" cy="22" r="3" stroke="#e0a020" strokeWidth="2" fill="#404040" /><circle cx="28" cy="22" r="3" stroke="#e0a020" strokeWidth="2" fill="#404040" /></g>,
  <g><path d="M21 9h11v7H21z" fill="#4cac28" /><path d="M11 20h6v12h-6z" fill="#f0a040" stroke="#b87020" /><circle cx="14" cy="13" r="11.500" fill="#f0cc10" stroke="#b09000" /><circle cx="14" cy="13" r="4.500" fill="#404040" stroke="#8c7400" strokeWidth="1.500" /></g>,
  <path d="M2 28V14h9V5h19v23z" fill="#bfe0ec" stroke="#70a8cc" strokeWidth="1.600" />,
  <g stroke="#888"><rect x="1" y="1" width="30" height="30" strokeWidth="1.500" /><path d="m11 21 10-10" strokeWidth="2.400" /><circle cx="9" cy="23" r="3" strokeWidth="1.600" /><circle cx="23" cy="9" r="3" strokeWidth="1.600" /></g>,
  <g><path d="M4 8v20M28 8v20M4 28h24" stroke="#7ea0e0" strokeWidth="2.600" /><circle cx="4" cy="5" r="3" stroke="#e0a020" strokeWidth="1.700" /><circle cx="28" cy="5" r="3" stroke="#e0a020" strokeWidth="1.700" /><text x="16" y="23" textAnchor="middle" fontSize="16" fill="#d8d8d8" className="font-['Open_Sans',sans-serif]">10</text></g>,
  <text x="17" y="29" textAnchor="middle" fontSize="40" fill="#5c9ce8" stroke="#5c9ce8" textLength="28" lengthAdjust="spacingAndGlyphs" className="font-['Liberation_Serif',serif]">A</text>,
  <path d="M3 29 29 3" stroke="#5c98e0" strokeWidth="3" />,
];

function Editor() {
  return (
    <div className="ml-[5px] flex w-[1460px] shrink-0 flex-col">
      <div className="flex h-[44px] items-end pb-[2px] text-[17px] text-[#dcdcdc]">
        <div className="flex h-[36px] w-[203px] items-center rounded-t-[6px] border-2 border-b-0 border-[#242424] bg-[#575757] pb-[3px] pl-[7px] text-white">
          <PcbIcon /><Fit w={147} className="ml-[7px] leading-[26px]">智能车主板.PcbDoc</Fit>
        </div>
        <div className="ml-[11px] flex h-[35px] items-center pb-[2px]"><SchIcon /><Fit w={147} className="ml-[9px] leading-[26px]">智能车主板.SchDoc</Fit></div>
        <div className="ml-[16px] flex h-[35px] items-center pb-[2px]"><LibIcon /><Fit w={138} className="ml-[8px] leading-[26px]">智能车主板.PcbLib</Fit></div>
      </div>
      <div className="relative h-[884px] bg-[#6e6a69]">
        <Board />
        <div className="absolute left-0 top-[-1px] h-[98px] w-[335px] border-2 border-[#1c1c1c] bg-gradient-to-b from-[#1e1f21] to-[#2e6080] pl-[3px] pt-[4px] font-['Liberation_Sans',sans-serif] text-[18.500px] font-bold leading-[22px] text-[#e0deaa]">
          <div className="flex"><Fit w={17}>x:</Fit><Fit w={84} className="ml-[13px]">2460.000</Fit><Fit w={30} className="ml-[16px]">dx:</Fit><Fit w={83} className="ml-[12px]">2220.000</Fit><Fit w={28} className="ml-[5px]">mil</Fit></div>
          <div className="flex"><Fit w={17}>y:</Fit><Fit w={80} className="ml-[13px]">-270.000</Fit><Fit w={30} className="ml-[20px]">dy:</Fit><Fit w={79} className="ml-[12px]">-125.000</Fit><Fit w={28} className="ml-[9px]">mil</Fit></div>
          <Fit w={163} className="mt-[2px] text-[23px] leading-[25px] text-[#fff000]">Mechanical 15</Fit>
          <Fit w={320} className="text-[16px] leading-[18px]">Snap: 5mil Hotspot Snap (All Layers): 8mil</Fit>
        </div>
        <div className="absolute left-[373px] top-[4px] flex h-[50px] w-[714px] rounded-[10px] bg-[#404040] pl-[5px]">
          {tools.map((t, i) => (
            <div key={i} className={"relative flex w-[50.300px] shrink-0 items-center justify-center " + (i === 5 ? "shadow-[-1px_0_0_#333]" : "")}>
              <svg width="32" height="32" viewBox="0 0 32 32" fill="none" className="overflow-visible">{t}</svg>
              {i > 1 && i !== 12 && <div className="absolute bottom-[4px] right-[1px] h-[8px] w-[8px] bg-[#d0d0d0] [clip-path:polygon(100%_0,100%_100%,0_100%)]" />}
            </div>
          ))}
        </div>
      </div>
      <LayerTabs />
    </div>
  );
}

const layers: [string, string, number, number][] = [
  ["Mechanical 13", "#ff00ff", 156, 109], ["Mechanical 15", "#008000", 161, 113], ["Top Overlay", "#ffff00", 138, 90], ["Bottom Overlay", "#808000", 166, 119],
  ["Top Paste", "#808080", 122, 73], ["Bottom Paste", "#800000", 150, 102], ["Top Solder", "#800080", 129, 80], ["Bottom Solder", "#ff00ff", 157, 111], ["Drill Guide", "#800000", 127, 81],
];
function LayerTabs() {
  return (
    <div className="flex h-[33px] overflow-hidden border-t border-[#202020] text-[16.500px] leading-[26px] text-[#d8d8d8]">
      <div className="ml-[5px] mt-[4px] flex h-[21px] w-[68px] shrink-0 rounded-r-[5px] border border-[#242424] bg-[#565656]">
        <div className="w-[37px] bg-[#008000]" />
        <div className="flex flex-1 items-center justify-center border-l border-[#242424] text-[15px] text-[#e8e8e8]">LS</div>
      </div>
      <div className="ml-[6px] mt-[1px] flex h-[30px] w-[62px] shrink-0 items-center justify-between rounded-[5px] border border-[#242424] bg-[#525252] px-[10px] pr-[12px]">
        <Svg w={6} h={12}><path d="M6 0v12L0 6z" fill="#fff" /></Svg>
        <Sep h={20} />
        <Svg w={6} h={12}><path d="M0 0v12l6-6z" fill="#fff" /></Svg>
      </div>
      <div className="ml-[4px] flex shrink-0">
        {layers.map(([t, c, w, tw], i) => (
          <div key={t} style={{ width: w }} className={"flex h-[32px] shrink-0 items-center rounded-b-[6px] border-2 border-t-0 border-[#242424] pl-[9px] " + (i === 1 ? "bg-[#4b4b4b] font-bold text-white" : "bg-[#363636]")}>
            <div className="h-[15px] w-[15px] shrink-0 border border-[#a8a8a8]" style={{ background: c }} />
            <Fit w={tw} className="ml-[12px] pt-[2px]">{t}</Fit>
          </div>
        ))}
      </div>
      <div className="h-[32px] w-5 shrink-0 rounded-bl-[6px] border-b-2 border-l-2 border-[#242424]" />
    </div>
  );
}

export default function App() {
  return (
    <div className={"flex h-[1080px] w-[1920px] flex-col overflow-hidden bg-[#343434] " + UI}>
      <TitleBar />
      <MenuBar />
      <div className="flex h-[967px] shrink-0">
        <Projects />
        <Editor />
        <div className="ml-[6px] mt-[6px] flex h-[955px] w-[36px] flex-col items-center bg-[#404040] pt-[1px] text-[16.500px] text-[#e4e4e4]">
          <div className="flex h-[120px] w-[30px] items-center justify-center rounded-[5px] border-2 border-[#262626] bg-[#525252] [writing-mode:vertical-rl]"><span className="tracking-[-0.100px]">Components</span></div>
          <div className="mt-[2px] flex h-[99px] w-[30px] items-center justify-center rounded-[5px] border-2 border-[#262626] bg-[#525252] [writing-mode:vertical-rl]"><span className="tracking-[-0.300px]">Properties</span></div>
        </div>
      </div>
      <div className="flex h-[35px] shrink-0 items-center bg-[#424242] pl-[8px] pr-[5px] text-[16px] leading-[26px] text-[#dcdcdc]">
        <Fit w={148}>X:2460mil Y:-270mil</Fit>
        <Fit w={73} className="ml-[20px]">Grid: 5mil</Fit>
        <Fit w={199} className="ml-[35px]">(Hotspot Snap (All Layers))</Fit>
        <div className="ml-[5px]"><Sep h={29} /></div>
        <div className="ml-[488px]"><Sep h={29} /></div>
        <div className="ml-auto flex h-[27px] w-[89px] items-center justify-center rounded-[5px] border-2 border-[#282828] bg-[#525252] text-[#ececec]">
          <Fit w={48}>Panels</Fit>
        </div>
      </div>
      <div className="h-[2px] shrink-0 bg-[#d8d8d8] pl-[743px]"><div className="h-[2px] w-[73px] bg-[#f4f4f4]" /></div>
    </div>
  );
}
